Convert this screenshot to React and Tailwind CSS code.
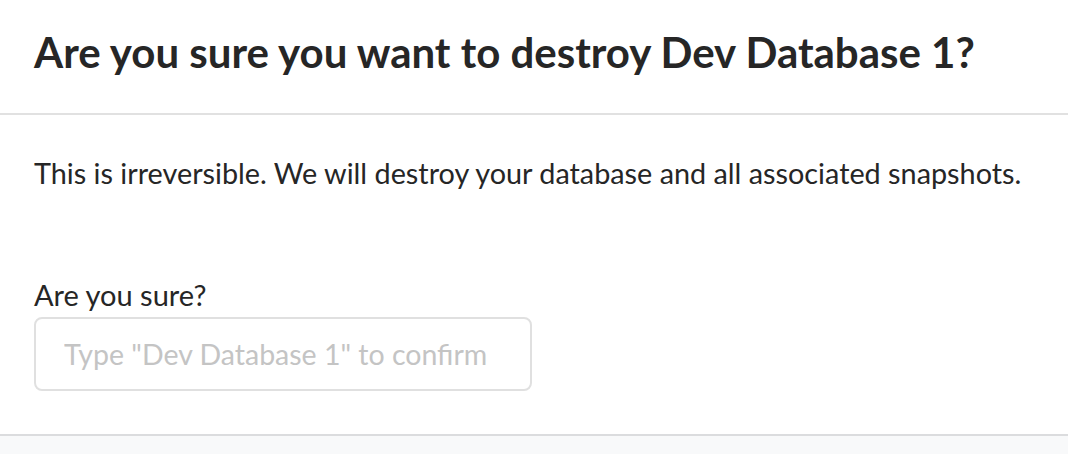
export default function App() {
  return (
    <div className="w-[1068px] h-[454px] bg-white flex flex-col font-['Lato','Liberation_Sans',sans-serif] overflow-hidden">
      {/* Header */}
      <div className="h-[115px] shrink-0 pt-[31px] px-[34px] border-b-2 border-[#e1e1e1]">
        <h1 className="text-[42px] font-bold text-[#262626] leading-none whitespace-nowrap">
          Are you sure you want to destroy Dev Database 1?
        </h1>
      </div>

      {/* Body */}
      <div className="flex flex-col shrink-0 px-[34px] pt-[34px] h-[321px] border-b-2 border-[#dbdcde]">
        <p className="text-[28.8px] text-[#262626] leading-[48px] whitespace-nowrap">
          This is irreversible. We will destroy your database and all associated snapshots.
        </p>

        <label className="mt-[80px] text-[29px] text-[#262626] leading-[36px]">Are you sure?</label>
        <input
          type="text"
          placeholder='Type "Dev Database 1" to confirm'
          className="mt-[4px] w-[498px] h-[74px] rounded-[8px] border-2 border-[#e0e0e0] px-[28px] text-[28.5px] text-[#262626] placeholder:text-[#c4c4c4] outline-none"
        />
      </div>

      {/* Footer */}
      <div className="flex-1 bg-[#f8f9fa]"></div>
    </div>
  );
}
